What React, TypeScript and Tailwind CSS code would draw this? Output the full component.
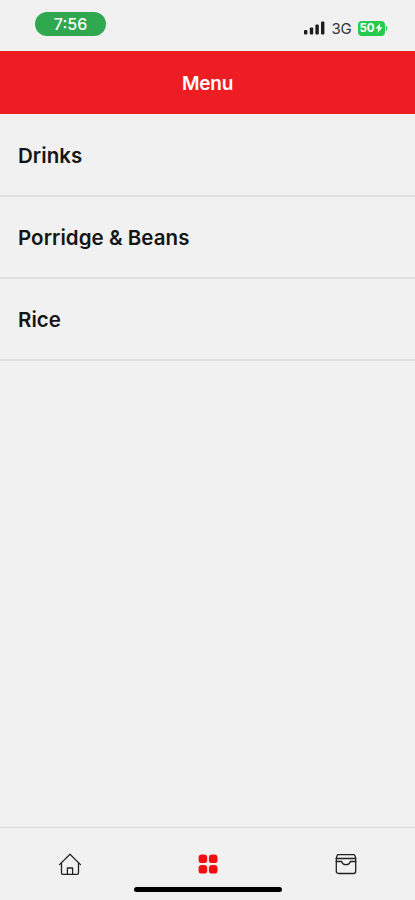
import React from 'react';

const categories = ['Drinks', 'Porridge & Beans', 'Rice'];

const SignalIcon = () => (
  <svg width="21" height="14" viewBox="0 0 21 14" fill="#1c1c1c">
    <rect x="0" y="9" width="3.4" height="4.5" rx="1" />
    <rect x="5.8" y="6.5" width="3.4" height="7" rx="1" />
    <rect x="11.4" y="3.6" width="3.4" height="9.9" rx="1" />
    <rect x="17" y="0.6" width="3.4" height="12.9" rx="1" />
  </svg>
);

const HomeIcon = () => (
  <svg width="24" height="24" viewBox="0 0 24 24" fill="none" stroke="#222" strokeWidth="1.3" strokeLinecap="round" strokeLinejoin="round">
    <path d="M1.5 12.6 12 2.2l10.5 10.4" />
    <path d="M3.5 11v10c0 .8.6 1.4 1.4 1.4h14.2c.8 0 1.4-.6 1.4-1.4V11" />
    <path d="M9.4 22.2v-6.2h5.2v6.2" />
  </svg>
);

const GridIcon = () => (
  <svg width="20" height="20" viewBox="0 0 20 20" fill="#f50d12">
    <rect x="0.6" y="0.5" width="8.6" height="8.6" rx="3.2" />
    <rect x="10.9" y="0.5" width="8.6" height="8.6" rx="3.2" />
    <rect x="0.6" y="11" width="8.6" height="8.6" rx="3.2" />
    <rect x="10.9" y="11" width="8.6" height="8.6" rx="3.2" />
  </svg>
);

const BagIcon = () => (
  <svg width="22" height="22" viewBox="0 0 22 22" fill="none" stroke="#222" strokeWidth="1.3" strokeLinecap="round" strokeLinejoin="round">
    <path d="M1.3 5 2.2 2.4c.2-.5.5-.7 1-.7h15.6c.5 0 .8.2 1 .7L20.700 5v13.200c0 1.400-.9 2.300-2.300 2.300H3.600c-1.400 0-2.300-.9-2.300-2.300z" />
    <path d="M1.300 5.500h19.400M1.300 8.500h5.300M15.400 8.500h5.300" />
    <path d="M6.600 8.500c.6 2 2.300 3.200 4.400 3.200s3.800-1.200 4.400-3.200" />
  </svg>
);

const StatusBar = () => (
  <div className="h-[51px] shrink-0 flex items-start justify-between pl-[35px] pr-[27px] pt-3">
    <div className="w-[71px] h-6 rounded-full bg-[#2fa84f] text-white text-base font-medium flex items-center justify-center">
      7:56
    </div>
    <div className="flex items-center h-8">
      <SignalIcon />
      <span className="ml-[7px] mt-0.5 w-[26px] text-[15px] tracking-[-0.3px] text-[#333]">3G</span>
      <div className="flex items-center mr-px">
        <div className="w-[27px] h-[15px] rounded-[4px] bg-[#26ca4d] text-white text-[11.5px] leading-none font-bold flex items-center justify-center">
          <span className="pt-px">50</span>
          <svg width="8" height="10" viewBox="0 0 8 10" fill="currentColor">
            <path d="M5.5 0 0.5 5.6h3L2.5 10l5-5.8h-3z" />
          </svg>
        </div>
        <div className="w-[1.5px] h-[5px] ml-px rounded-r-full bg-[#26ca4d]" />
      </div>
    </div>
  </div>
);

const App: React.FC = () => {
  return (
    <div className="h-screen flex flex-col bg-[#f1f1f1] font-['Inter',sans-serif] overflow-hidden">
      <StatusBar />

      <header className="h-[63px] pt-[3px] shrink-0 bg-[#ee1c23] flex items-center justify-center">
        <h1 className="text-white text-[19px] font-semibold tracking-[-0.2px]">Menu</h1>
      </header>

      <main className="flex-1">
        {categories.map((name) => (
          <div key={name} className="h-[82px] px-[18px] pt-[3px] first:pt-1 flex items-center border-b-2 border-[#e0e0e0] first:h-[83px]">
            <span className="text-[20.5px] font-semibold text-[#151515] tracking-[0.05px]">{name}</span>
          </div>
        ))}
      </main>

      <nav className="h-[73px] shrink-0 border-t border-[#d8d8d8] flex flex-col justify-between">
        <div className="grid grid-cols-3 h-[58px] pt-[14px] pl-px items-center justify-items-center">
          <HomeIcon />
          <GridIcon />
          <BagIcon />
        </div>
        <div className="w-[148px] h-[5px] rounded-full bg-black mx-auto mb-2" />
      </nav>
    </div>
  );
};

export default App;
